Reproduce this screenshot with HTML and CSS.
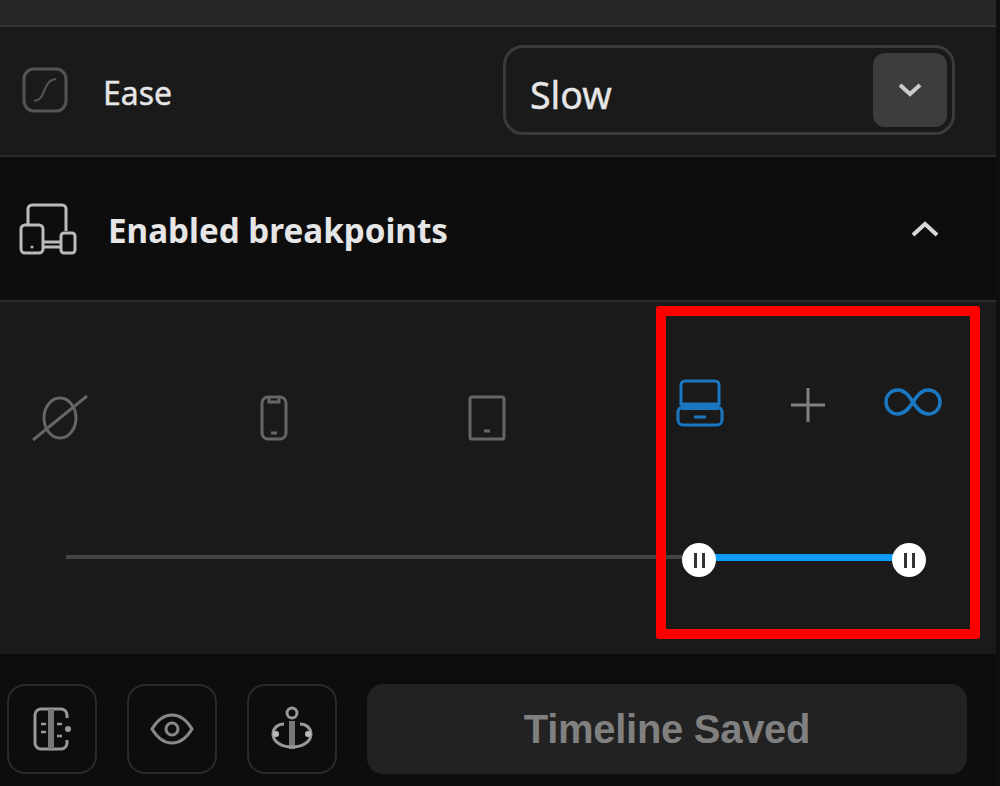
FILE: index.html
```html
<!DOCTYPE html>
<html lang="en">
<head>
  <meta charset="UTF-8">
  <meta name="viewport" content="width=device-width, initial-scale=1.0">
  <title>Enabled breakpoints</title>
  <link rel="stylesheet" href="styles.css">
</head>
<body>
  <div class="panel">
    <div class="top-bar"></div>

    <div class="ease-row">
      <svg class="ease-icon" viewBox="0 0 46 46" fill="none" stroke="#555" stroke-width="3">
        <rect x="2" y="2" width="42" height="42" rx="10"/>
        <path d="M12 34c8-1 8-6 11-12s4-9 11-10" stroke-width="2"/>
      </svg>
      <span class="ease-label">Ease</span>
      <div class="select">
        <span class="select-value">Slow</span>
        <div class="select-btn">
          <svg width="24" height="14" viewBox="0 0 24 14" fill="none" stroke="#ccc" stroke-width="4">
            <path d="M2 2l10 9 10-9"/>
          </svg>
        </div>
      </div>
    </div>

    <div class="section-head">
      <svg class="head-icon" viewBox="0 0 58 52" fill="none" stroke="#bbb" stroke-width="3">
        <path d="M9 22V6a4 4 0 0 1 4-4h30a4 4 0 0 1 4 4v22"/>
        <rect x="2" y="22" width="22" height="28" rx="4"/>
        <rect x="42" y="30" width="14" height="20" rx="3"/>
        <path d="M24 39h18M24 44h18"/>
        <circle cx="13" cy="44" r="1.5" fill="#bbb" stroke="none"/>
      </svg>
      <span class="head-title">Enabled breakpoints</span>
      <svg class="head-chevron" width="28" height="16" viewBox="0 0 28 16" fill="none" stroke="#d8d8d8" stroke-width="4">
        <path d="M2 14L14 3l12 11"/>
      </svg>
    </div>

    <div class="breakpoints">
      <div class="bp-icons">
        <div class="bp-cell bp-low">
          <svg width="56" height="46" viewBox="0 0 56 46" fill="none" stroke="#666" stroke-width="3">
            <ellipse cx="28" cy="23" rx="16" ry="20"/>
            <path d="M1 45L55 1"/>
          </svg>
        </div>
        <div class="bp-cell bp-low">
          <svg width="28" height="46" viewBox="0 0 28 46" fill="none" stroke="#666" stroke-width="3">
            <rect x="2" y="2" width="24" height="42" rx="6"/>
            <path d="M9 3v4h10V3M11 38h6"/>
          </svg>
        </div>
        <div class="bp-cell bp-low">
          <svg width="38" height="46" viewBox="0 0 38 46" fill="none" stroke="#666" stroke-width="3">
            <rect x="2" y="2" width="34" height="42" rx="2"/>
            <path d="M16 36h6"/>
          </svg>
        </div>
        <div class="bp-cell bp-high">
          <svg width="48" height="48" viewBox="0 0 48 48" fill="none" stroke="#1a78c2" stroke-width="3">
            <path d="M5 25V6a4 4 0 0 1 4-4h30a4 4 0 0 1 4 4v19z"/>
            <rect x="2" y="28" width="44" height="18" rx="5"/>
            <path d="M5 28h38" stroke-width="6"/>
            <path d="M18 38h12"/>
          </svg>
        </div>
        <div class="bp-cell bp-plus">
          <svg width="36" height="36" viewBox="0 0 36 36" fill="none" stroke="#808080" stroke-width="3">
            <path d="M18 1v34M1 18h34"/>
          </svg>
        </div>
        <div class="bp-cell bp-inf">
          <svg width="58" height="30" viewBox="0 0 58 30" fill="none" stroke="#1a78c2" stroke-width="3.5">
            <path d="M29 15C24 7 20 3 14 3 7 3 2 8 2 15s5 12 12 12c6 0 10-4 15-12s9-12 15-12c7 0 12 5 12 12s-5 12-12 12c-6 0-10-4-15-12z"/>
          </svg>
        </div>
      </div>

      <div class="slider">
        <div class="slider-active"></div>
        <div class="handle handle-start"><i></i><i></i></div>
        <div class="handle handle-end"><i></i><i></i></div>
      </div>

      <div class="highlight"></div>
    </div>

    <div class="footer">
      <button class="tool-btn">
        <svg width="40" height="46" viewBox="0 0 40 46" fill="none" stroke="#999" stroke-width="3">
          <path d="M35 12V9a6 6 0 0 0-6-6H9a6 6 0 0 0-6 6v28a6 6 0 0 0 6 6h20a6 6 0 0 0 6-6v-3"/>
          <path d="M19 3v40" stroke-width="6" stroke="#777"/>
          <path d="M9 18h5M9 26h5M25 18h5M25 30h5" stroke-width="2.5"/>
          <circle cx="36" cy="23" r="3" fill="#999" stroke="none"/>
        </svg>
      </button>
      <button class="tool-btn">
        <svg width="44" height="32" viewBox="0 0 44 32" fill="none" stroke="#888" stroke-width="3">
          <path d="M2 16C8 6 14 2 22 2s14 4 20 14c-6 10-12 14-20 14S8 26 2 16z"/>
          <circle cx="22" cy="16" r="6"/>
        </svg>
      </button>
      <button class="tool-btn">
        <svg width="44" height="46" viewBox="0 0 44 46" fill="none" stroke="#999" stroke-width="3">
          <circle cx="22" cy="7" r="5"/>
          <path d="M22 15v28" stroke-width="6" stroke="#777"/>
          <path d="M14 18c-6 0-11 4-11 10 0 8 9 13 19 13s19-5 19-13c0-6-5-10-11-10"/>
          <circle cx="6" cy="28" r="3" fill="#bbb" stroke="none"/>
          <circle cx="38" cy="28" r="3" fill="#bbb" stroke="none"/>
        </svg>
      </button>
      <button class="save-btn">Timeline Saved</button>
    </div>
  </div>
</body>
</html>
```

FILE: styles.css
```css
/* Timeline panel, dark theme */
body {
  margin: 0;
  height: 786px;
  overflow: hidden;
  background-color: #0f0f0f;
  font-family: "Noto Sans", sans-serif;
  color: #e6e6e6;
}
.panel {
  width: 996px;
  height: 786px;
  display: flex;
  flex-direction: column;
}
.top-bar {
  height: 25px;
  background-color: #262626;
  border-bottom: 2px solid #333;
}

/* Ease row */
.ease-row {
  height: 126px;
  display: flex;
  align-items: center;
  padding: 0 41px 2px 22px;
  background-color: #1a1a1a;
  border-bottom: 2px solid #2b2b2b;
}
.ease-icon {
  width: 46px;
  height: 46px;
}
.ease-label {
  margin-left: 35px;
  padding-top: 4px;
  font-size: 33px;
  transform: scaleX(0.97);
  transform-origin: left;
  -webkit-text-stroke: 0.4px #e6e6e6;
}
.select {
  margin-left: auto;
  width: 452px;
  height: 90px;
  box-sizing: border-box;
  display: flex;
  align-items: center;
  justify-content: space-between;
  padding: 0 5px 0 24px;
  border: 3px solid #3a3a3a;
  border-radius: 20px;
}
.select-value {
  padding-top: 8px;
  font-size: 37.5px;
  -webkit-text-stroke: 0.4px #e6e6e6;
}
.select-btn {
  width: 74px;
  height: 74px;
  display: flex;
  align-items: center;
  justify-content: center;
  background-color: #3d3d3d;
  border-radius: 12px;
}

/* Section heading */
.section-head {
  height: 143px;
  display: flex;
  align-items: center;
  padding: 0 57px 0 19px;
  background-color: #0d0d0d;
  border-bottom: 2px solid #2b2b2b;
}
.head-icon {
  width: 58px;
  height: 52px;
}
.head-title {
  margin-left: 31px;
  padding-top: 4px;
  font-size: 33.2px;
  font-weight: 700;
}
.head-chevron {
  margin-left: auto;
}

/* Breakpoint icons and range slider. Columns run from one icon centre to the next */
.breakpoints {
  position: relative;
  height: 352px;
  background-color: #1a1a1a;
}
.bp-icons {
  display: grid;
  grid-template-columns: 214px 213px 213px 108px 105px 60px;
  height: 200px;
  margin-left: 60px;
}
.bp-cell svg {
  display: block;
  transform: translateX(-50%);
}
.bp-low {
  padding-top: 93px;
}
.bp-high {
  padding-top: 77px;
}
.bp-plus {
  padding-top: 85px;
}
.bp-inf {
  padding-top: 85px;
}
.slider {
  position: relative;
  margin: 53px 0 0 66px;
  width: 844px;
  height: 4px;
  background-color: #444;
}
.slider-active {
  position: absolute;
  left: 633px;
  right: 0;
  top: -1px;
  height: 7px;
  background-color: #0a9bf5;
}
.handle {
  position: absolute;
  top: -12px;
  width: 34px;
  height: 34px;
  display: flex;
  align-items: center;
  justify-content: center;
  gap: 5px;
  background-color: #fff;
  border-radius: 50%;
}
.handle i {
  width: 3px;
  height: 15px;
  background-color: #333;
}
.handle-start {
  left: 616px;
}
.handle-end {
  left: 826px;
}
.highlight {
  position: absolute;
  left: 656px;
  top: 4px;
  width: 324px;
  height: 333px;
  box-sizing: border-box;
  border: 10px solid #ff0000;
  border-radius: 3px;
}

/* Footer */
.footer {
  flex: 1;
  display: flex;
  align-items: flex-start;
  gap: 30px;
  padding: 30px 29px 0 7px;
  background-color: #0d0d0d;
}
.tool-btn {
  width: 90px;
  height: 90px;
  padding: 0;
  display: flex;
  align-items: center;
  justify-content: center;
  background: none;
  border: 2px solid #2a2a2a;
  border-radius: 18px;
}
.save-btn {
  flex: 1;
  height: 90px;
  border: none;
  border-radius: 16px;
  background-color: #222;
  color: #808080;
  font-family: "Liberation Sans", Arial, sans-serif;
  font-size: 40px;
  font-weight: 700;
  letter-spacing: -0.3px;
}
```
